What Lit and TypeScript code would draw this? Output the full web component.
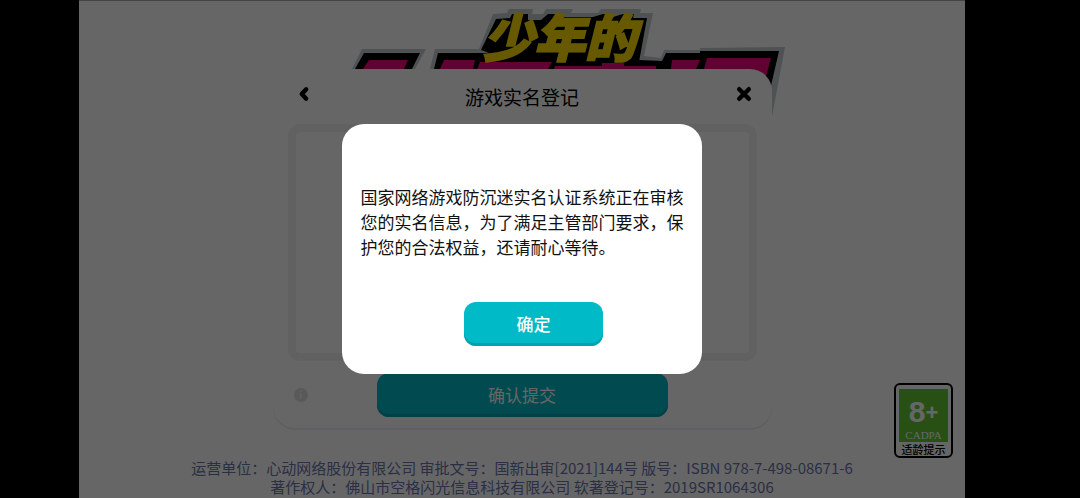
import { LitElement, html, css, svg } from "lit";
import { customElement } from "lit/decorators.js";

const logo = svg`
  <g fill="#c4cccf">
    <path d="M12 69L22 49H86L75 69Z"/>
    <path d="M90 69L95 49H139L153 14L167 13L169 9H193L192 14H203L206 9H233L231 13H258L261 9H301L300 13H313L304 56L321 58L324 50H360V48L445 47L431 122H428L420 69Z"/>
  </g>
  <g fill="#000">
    <path d="M15 69L24 53H80L72 69Z"/>
    <path d="M94 69L98 53H150L299 60L322 61L326 53H360V51H439L430 90L415 80L408 69Z"/>
    <path d="M141 50L156 19L170 18L172 14H188V20L201 20L208 14H223L222 17H253L263 14H274L273 17L283 14H294L293 18H307L299 62H147L149 53Z"/>
  </g>
  <g fill="#f0087f">
    <path d="M23 69L29 60H68L64 69Z"/>
    <path d="M100 69L104 60H135L133 69Z"/>
    <path d="M137 69L140 62H212L208 69Z"/>
    <path d="M214 69L215 66H262V63H284V66H316V69Z"/>
    <path d="M331 69L332 60H360L356 69Z"/>
    <path d="M364 69L367 58H431L424 84L400 84V69Z"/>
  </g>
  <text class="logo-text" x="143" y="57">少年的</text>`;

@customElement("app-root")
export class AppRoot extends LitElement {
  static styles = css`
    :host {
      display: block;
      min-height: 100vh;
      background: #000;
      font-family: "Noto Sans CJK SC", "Noto Sans", sans-serif;
      color: #000;
    }
    * {
      box-sizing: border-box;
    }
    button {
      font: inherit;
      border: 0;
      padding: 0;
      cursor: pointer;
    }
    .stage {
      position: relative;
      min-height: 100vh;
      margin: 0 115px 0 79px;
      padding-top: 68px;
      background: #fff;
      border-top: 1px solid #aaa;
      display: flex;
      flex-direction: column;
      align-items: center;
    }
    .logo {
      position: absolute;
      top: -1px;
      left: 50%;
      margin-left: -182px;
      width: 446px;
      height: 124px;
      overflow: visible;
    }
    .logo-text {
      font: italic 900 51px/1 "Noto Sans CJK SC", sans-serif;
      fill: #ffdf00;
      stroke: #ffdf00;
      stroke-width: 2px;
    }
    .card {
      position: relative;
      width: 100%;
      max-width: 499px;
      padding: 0 15px 11px;
      background: #fff;
      border-radius: 22px;
      box-shadow: 0 2px 0 #eceef2;
    }
    .card-head {
      display: grid;
      grid-template-columns: 32px 1fr 32px;
      align-items: center;
      height: 55px;
    }
    h1 {
      margin: 0;
      font-size: 19px;
      line-height: 28px;
      font-weight: 400;
      text-align: center;
    }
    .icon-button {
      display: grid;
      place-items: center;
      height: 32px;
      margin-bottom: 6px;
      background: none;
    }
    .close {
      justify-items: end;
      padding-right: 5px;
    }
    .icon-button svg {
      width: 16px;
      height: 16px;
      fill: none;
      stroke: #000;
      stroke-width: 4.4;
      stroke-linecap: round;
      stroke-linejoin: round;
    }
    .panel {
      height: 237px;
      border: 8px solid #f2f2f2;
      border-radius: 12px;
      background: #fff;
    }
    .card-foot {
      display: grid;
      grid-template-columns: 89px 1fr 89px;
      align-items: center;
      margin-top: 12px;
    }
    .info {
      width: 14px;
      height: 14px;
      margin-left: 6px;
      border-radius: 50%;
      background: #dedede;
      color: #f4f4f4;
      font-size: 10px;
      line-height: 14px;
      font-weight: 700;
      text-align: center;
    }
    .action {
      background: #00bac8;
      color: #fff;
      font-size: 17px;
      line-height: 24px;
      border-radius: 12px;
      box-shadow: inset 0 -3px 0 #00a2b0;
      height: 44px;
    }
    .legal {
      margin: 30px 0 0;
      font-size: 15px;
      line-height: 19px;
      color: #6c76ad;
      text-align: center;
    }
    .rating {
      position: absolute;
      right: 12px;
      bottom: 40px;
      width: 59px;
      padding: 4px 3px 0;
      border: 2px solid #000;
      border-radius: 6px;
      font-size: 11px;
      line-height: 14px;
      font-weight: 500;
      text-align: center;
      white-space: nowrap;
    }
    .rating-box {
      display: block;
      height: 53px;
      background: #64c832;
      color: #fff;
    }
    .rating-age {
      display: block;
      padding-top: 5px;
      font: 700 30px/35px "Liberation Sans", sans-serif;
    }
    .rating-age span {
      font-size: 22px;
      vertical-align: 2px;
    }
    .rating-org {
      display: block;
      font: 11px/11px "Liberation Serif", serif;
    }
    .backdrop {
      position: absolute;
      inset: -1px 0 0;
      display: grid;
      place-items: center;
      background: rgba(0, 0, 0, 0.6);
    }
    .dialog {
      width: 360px;
      padding: 60px 18px 28px;
      border-radius: 22px;
      background: #fff;
      display: flex;
      flex-direction: column;
      align-items: center;
      gap: 43px;
    }
    .dialog p {
      margin: 0;
      font-size: 17px;
      line-height: 25px;
      width: 323px;
      color: #111;
    }
    .dialog .action {
      width: 139px;
      margin-left: 23px;
      font-weight: 500;
    }
  `;

  render() {
    return html`
      <main class="stage">
        <svg class="logo" viewBox="0 0 446 124" role="img" aria-label="少年的">
          ${logo}
        </svg>
        <section class="card">
          <header class="card-head">
            <button class="icon-button" aria-label="返回">
              <svg viewBox="0 0 16 16"><path d="M10.200 3.300L5.800 8L10.200 12.700" /></svg>
            </button>
            <h1>游戏实名登记</h1>
            <button class="icon-button close" aria-label="关闭">
              <svg viewBox="0 0 16 16"><path d="M3.200 3.200L12.800 12.800M12.800 3.200L3.200 12.800" /></svg>
            </button>
          </header>
          <div class="panel"></div>
          <div class="card-foot">
            <span class="info">i</span>
            <button class="action">确认提交</button>
          </div>
        </section>
        <p class="legal">
          运营单位：心动网络股份有限公司 审批文号：国新出审[2021]144号 版号：ISBN 978-7-498-08671-6<br />
          著作权人：佛山市空格闪光信息科技有限公司 软著登记号：2019SR1064306
        </p>
        <div class="rating">
          <span class="rating-box">
            <span class="rating-age">8<span>+</span></span>
            <span class="rating-org">CADPA</span>
          </span>
          适龄提示
        </div>
        <div class="backdrop">
          <div class="dialog" role="dialog" aria-modal="true" aria-describedby="notice">
            <p id="notice">
              国家网络游戏防沉迷实名认证系统正在审核您的实名信息，为了满足主管部门要求，保护您的合法权益，还请耐心等待。
            </p>
            <button class="action">确定</button>
          </div>
        </div>
      </main>
    `;
  }
}
